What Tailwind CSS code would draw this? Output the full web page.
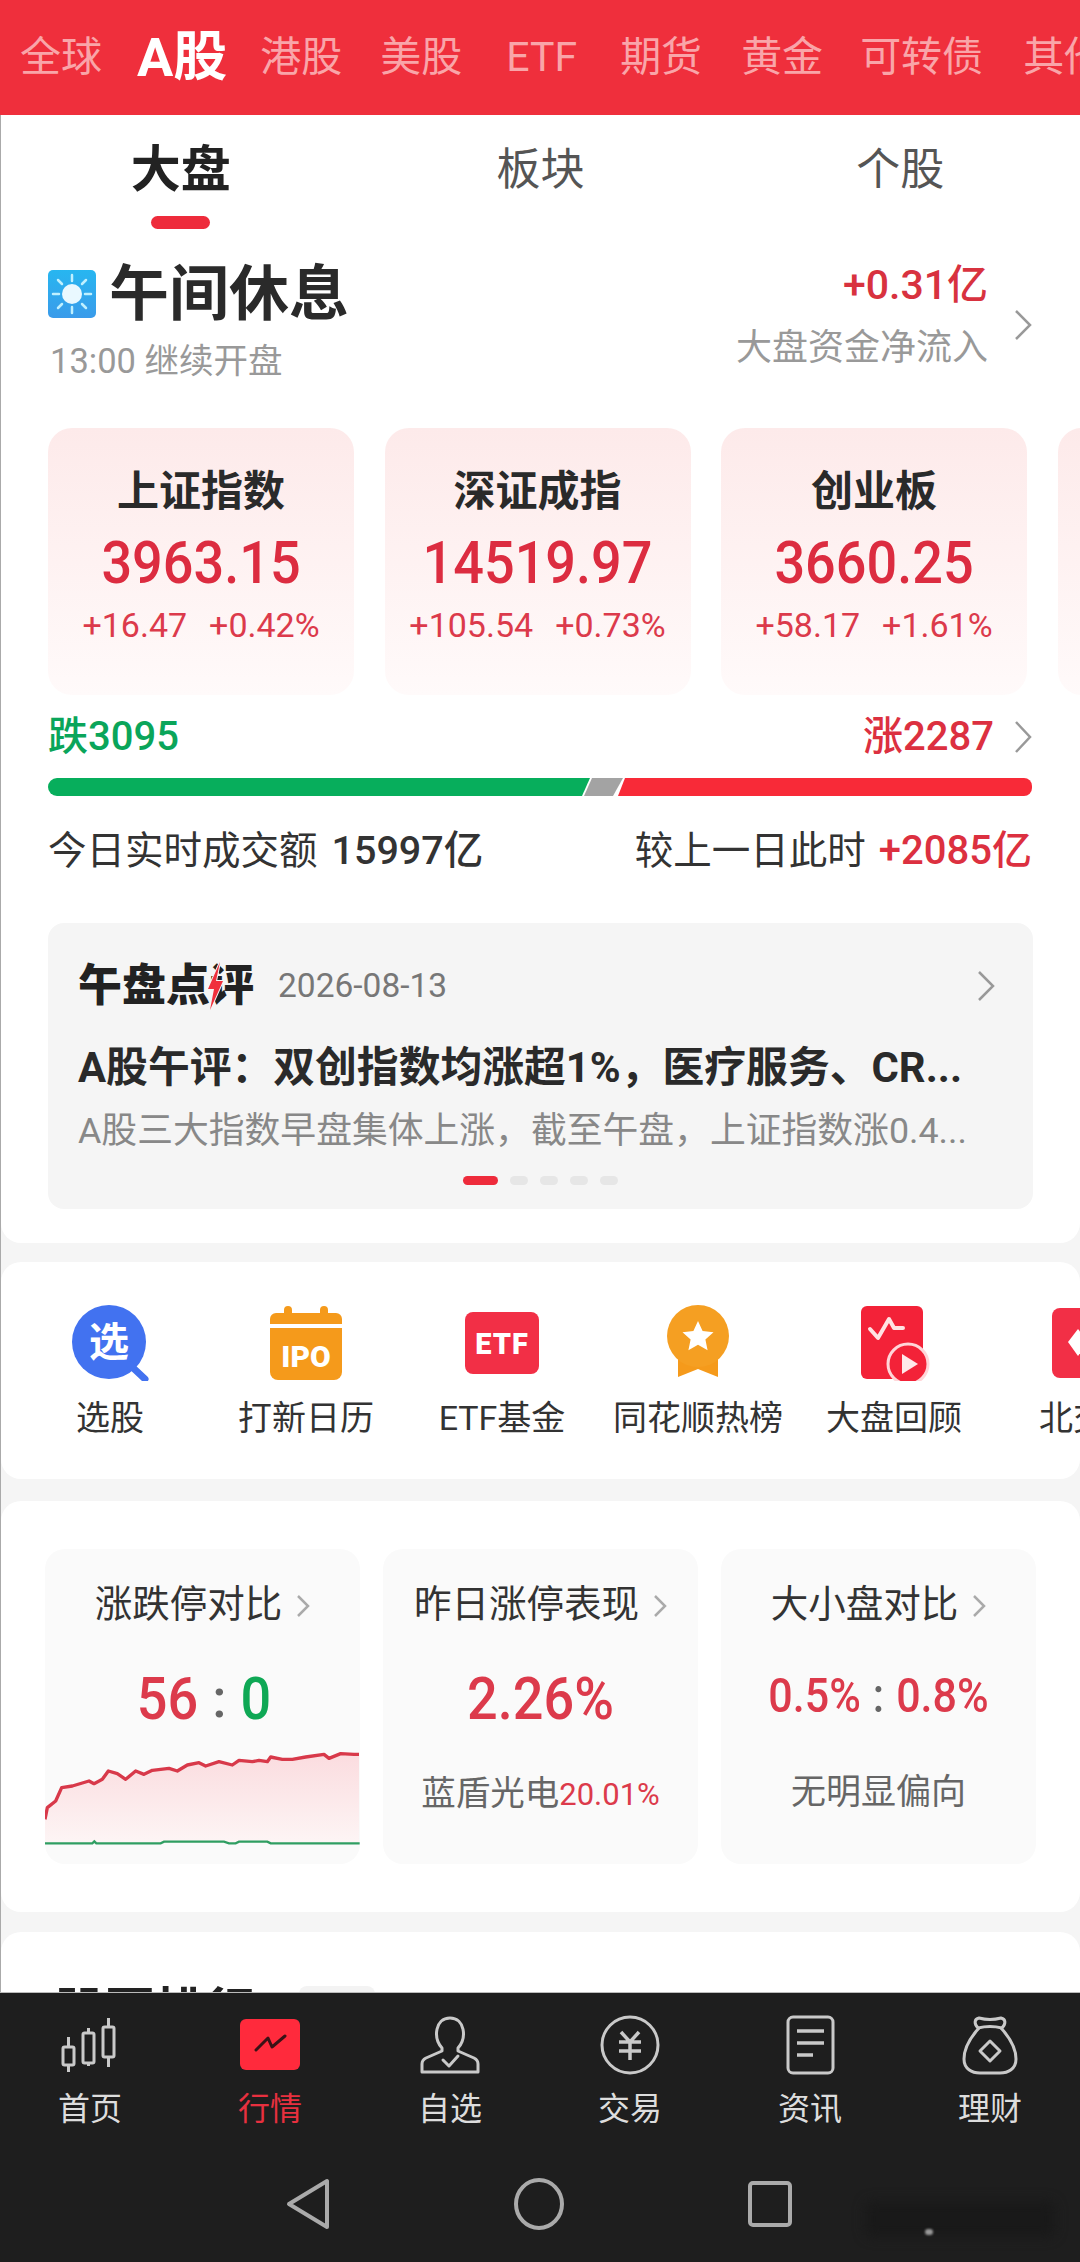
<!DOCTYPE html>
<html lang="zh-CN">
<head>
    <meta charset="UTF-8">
    <meta name="viewport" content="width=device-width, initial-scale=1.0">
    <title>行情</title>
    <script src="https://cdn.jsdelivr.net/npm/@tailwindcss/browser@4"></script>
</head>
<body class="relative flex h-[2262px] w-[1080px] flex-col overflow-hidden bg-[#f5f5f5] font-['Roboto','Noto_Sans_CJK_SC',sans-serif]">

    <!-- Market tabs -->
    <header class="flex h-[115px] shrink-0 items-center overflow-hidden whitespace-nowrap bg-[#ef2f3c] pl-[20px] text-[41px] leading-none text-[#f9a5a9]">
        <span>全球</span>
        <span class="ml-[35px] text-[54px] font-bold text-white">A股</span>
        <span class="ml-[33px]">港股</span>
        <span class="ml-[38px]">美股</span>
        <span class="ml-[44px]">ETF</span>
        <span class="ml-[43px]">期货</span>
        <span class="ml-[39px]">黄金</span>
        <span class="ml-[37px]">可转债</span>
        <span class="ml-[40px]">其他</span>
    </header>

    <main class="min-h-0 flex-1 overflow-hidden border-l border-[#aaa]">

        <!-- Overview -->
        <section class="h-[1128px] rounded-b-[20px] bg-white">
            <div class="grid h-[123px] grid-cols-3 text-center">
                <div class="flex flex-col items-center pt-[28px]">
                    <span class="text-[50px] font-bold leading-[54px] text-[#222]">大盘</span>
                    <span class="mt-[19px] h-[13px] w-[59px] rounded-full bg-[#ee2b3b]"></span>
                </div>
                <div class="pt-[28px] text-[44px] leading-[54px] text-[#555]">板块</div>
                <div class="pt-[28px] text-[44px] leading-[54px] text-[#555]">个股</div>
            </div>

            <div class="mt-[22px] flex justify-between pl-[47px] pr-[48px]">
                <div>
                    <div class="flex items-center pt-[3px]">
                        <svg class="mr-[13px] -mt-[3px]" width="48" height="48" viewBox="0 0 48 48">
                            <defs><linearGradient id="sky" x1="0" y1="0" x2="0" y2="1"><stop offset="0" stop-color="#27b6f0"/><stop offset="1" stop-color="#3a9bea"/></linearGradient></defs>
                            <rect width="48" height="48" rx="5" fill="url(#sky)"/>
                            <circle cx="24" cy="24" r="10" fill="#e9f8ff"/>
                            <path d="M24 5v6M24 37v6M5 24h6M37 24h6M10 10l4 4M38 10l-4 4M10 38l4-4M38 38l-4-4" stroke="#bff0ff" stroke-width="2.5" stroke-linecap="round"/>
                        </svg>
                        <span class="text-[60px] font-bold leading-[64px] text-[#2a2a2a]">午间休息</span>
                    </div>
                    <div class="mt-[14px] pl-[2px] text-[34.5px] leading-[40px] text-[#999]">13:00 继续开盘</div>
                </div>
                <div class="flex items-center">
                    <div class="-mt-[9px] text-right">
                        <div class="text-[41px] font-medium leading-[40px] text-[#d8323f]">+0.31亿</div>
                        <div class="mt-[23px] text-[36px] leading-[40px] text-[#999]">大盘资金净流入</div>
                    </div>
                    <svg class="ml-[26px] mt-[8px]" width="18" height="32" viewBox="0 0 18 32" fill="none" stroke="#999" stroke-width="2.5"><path d="M2 2l14 14L2 30"/></svg>
                </div>
            </div>

            <!-- Index cards -->
            <div class="mt-[47px] flex gap-[30.5px] overflow-hidden pl-[47px] text-center">
                <div class="h-[267px] w-[306px] shrink-0 rounded-[24px] bg-linear-to-b from-[#fdeaea] to-[#fffafa] pt-[42px]">
                    <div class="text-[42px] font-bold leading-[44px] text-[#2a2a2a]">上证指数</div>
                    <div class="mt-[19px] inline-block scale-y-110 text-[54px] font-medium leading-[60px] text-[#dc2c40]">3963.15</div>
                    <div class="mt-[14px] flex justify-center gap-[22px] text-[34px] leading-[36px] text-[#dc3a4b]"><span>+16.47</span><span>+0.42%</span></div>
                </div>
                <div class="h-[267px] w-[306px] shrink-0 rounded-[24px] bg-linear-to-b from-[#fdeaea] to-[#fffafa] pt-[42px]">
                    <div class="text-[42px] font-bold leading-[44px] text-[#2a2a2a]">深证成指</div>
                    <div class="mt-[19px] inline-block scale-y-110 text-[54px] font-medium leading-[60px] text-[#dc2c40]">14519.97</div>
                    <div class="mt-[14px] flex justify-center gap-[22px] text-[34px] leading-[36px] text-[#dc3a4b]"><span>+105.54</span><span>+0.73%</span></div>
                </div>
                <div class="h-[267px] w-[306px] shrink-0 rounded-[24px] bg-linear-to-b from-[#fdeaea] to-[#fffafa] pt-[42px]">
                    <div class="text-[42px] font-bold leading-[44px] text-[#2a2a2a]">创业板</div>
                    <div class="mt-[19px] inline-block scale-y-110 text-[54px] font-medium leading-[60px] text-[#dc2c40]">3660.25</div>
                    <div class="mt-[14px] flex justify-center gap-[22px] text-[34px] leading-[36px] text-[#dc3a4b]"><span>+58.17</span><span>+1.61%</span></div>
                </div>
                <div class="h-[267px] w-[306px] shrink-0 rounded-[24px] bg-linear-to-b from-[#fdeaea] to-[#fffafa]"></div>
            </div>

            <!-- Advance / decline -->
            <div class="mt-[20px] flex items-center justify-between pl-[47px] pr-[48px] text-[40px] font-medium leading-[44px]">
                <span class="text-[#0aa55a]">跌3095</span>
                <span class="flex items-center text-[#dc3040]">涨2287<svg class="ml-[20px]" width="18" height="34" viewBox="0 0 18 34" fill="none" stroke="#999" stroke-width="2.5"><path d="M2 2l14 15L2 32"/></svg></span>
            </div>
            <svg class="ml-[47px] mt-[19px] block" width="985" height="18" viewBox="0 0 985 18">
                <path d="M9 0H542L534 18H9A9 9 0 0 1 9 0Z" fill="#07ae5c"/>
                <path d="M544 0H575L565 18H536Z" fill="#a3a3a3"/>
                <path d="M577 0H976A8 8 0 0 1 984 8V10A8 8 0 0 1 976 18H570Z" fill="#f82a38"/>
            </svg>
            <div class="mt-[33px] flex items-baseline justify-between pl-[47px] pr-[48px] text-[38.5px] leading-[44px] text-[#333]">
                <span>今日实时成交额<span class="ml-[14px] text-[39.5px] font-medium">15997亿</span></span>
                <span>较上一日此时<span class="ml-[13px] text-[40px] font-medium text-[#dc3040]">+2085亿</span></span>
            </div>

            <!-- Midday review -->
            <div class="ml-[47px] mt-[50px] h-[286px] w-[985px] rounded-[16px] bg-[#f5f5f5] px-[30px] pt-[38px]">
                <div class="flex items-center justify-between">
                    <div class="flex items-center">
                        <span class="relative text-[44px] font-black leading-[50px] text-[#222]">午盘点评
                            <svg class="absolute left-[127px] top-[1px]" width="20" height="48" viewBox="0 0 20 48"><path d="M15 0L3 27H9L5 48 18 19H11Z" fill="#f0303c" stroke="#f5f5f5" stroke-width="2" paint-order="stroke"/></svg>
                        </span>
                        <span class="ml-[24px] text-[33.5px] leading-[50px] text-[#777]">2026-08-13</span>
                    </div>
                    <svg width="18" height="32" viewBox="0 0 18 32" fill="none" stroke="#999" stroke-width="2.5" class="mr-[8px]"><path d="M2 2l14 14L2 30"/></svg>
                </div>
                <div class="mt-[32px] whitespace-nowrap text-[41.8px] font-bold leading-[50px] text-[#2a2a2a]">A股午评：双创指数均涨超1%，医疗服务、CR...</div>
                <div class="mt-[16px] whitespace-nowrap text-[35.8px] leading-[44px] text-[#888]">A股三大指数早盘集体上涨，截至午盘，上证指数涨0.4...</div>
                <div class="mt-[23px] flex justify-center gap-[12px]">
                    <span class="h-[9px] w-[35px] rounded-full bg-[#ee2b3b]"></span>
                    <span class="h-[9px] w-[18px] rounded-full bg-[#e6e6e6]"></span>
                    <span class="h-[9px] w-[18px] rounded-full bg-[#e6e6e6]"></span>
                    <span class="h-[9px] w-[18px] rounded-full bg-[#e6e6e6]"></span>
                    <span class="h-[9px] w-[18px] rounded-full bg-[#e6e6e6]"></span>
                </div>
            </div>
        </section>

        <!-- Shortcuts -->
        <section class="mt-[19px] flex h-[217px] overflow-hidden rounded-[20px] bg-white pl-[11px] pt-[43px] text-center text-[34px] leading-[40px] text-[#333]">
            <div class="w-[196px] shrink-0">
                <svg class="mx-auto block" width="80" height="76" viewBox="0 0 80 76">
                    <circle cx="39" cy="37" r="37" fill="#4272f0"/>
                    <path d="M60 60l15 14" stroke="#4272f0" stroke-width="7" stroke-linecap="round"/>
                    <text x="39" y="51" font-size="40" font-weight="700" fill="#fff" text-anchor="middle">选</text>
                </svg>
                <div class="mt-[17px] whitespace-nowrap">选股</div>
            </div>
            <div class="w-[196px] shrink-0">
                <svg class="mx-auto block" width="72" height="76" viewBox="0 0 72 76">
                    <path d="M14 8V5a4 4 0 0 1 8 0v3h28V5a4 4 0 0 1 8 0v3h8a6 6 0 0 1 6 6v5H0v-5a6 6 0 0 1 6-6Z" fill="#f59a1b"/>
                    <path d="M0 23h72v44a8 8 0 0 1-8 8H8a8 8 0 0 1-8-8Z" fill="#f59a1b"/>
                    <text x="36" y="62" font-size="30" font-weight="900" fill="#fff" text-anchor="middle">IPO</text>
                </svg>
                <div class="mt-[17px] whitespace-nowrap">打新日历</div>
            </div>
            <div class="w-[196px] shrink-0">
                <svg class="mx-auto block" width="76" height="76" viewBox="0 0 76 76">
                    <rect x="1" y="7" width="74" height="62" rx="8" fill="#f22f46"/>
                    <text x="38" y="49" font-size="29" font-weight="900" letter-spacing="1" fill="#fff" text-anchor="middle">ETF</text>
                </svg>
                <div class="mt-[17px] whitespace-nowrap">ETF基金</div>
            </div>
            <div class="w-[196px] shrink-0">
                <svg class="mx-auto block" width="64" height="76" viewBox="0 0 64 76">
                    <path d="M12 50V72L32 64 52 72V50Z" fill="#f59a1b"/>
                    <circle cx="32" cy="31" r="31" fill="#f59f22"/>
                    <path d="M32 16l4.6 10 10.9 1.2-8.1 7.3 2.2 10.7L32 39.7l-9.600 5.5 2.200-10.700-8.100-7.300L27.400 26Z" fill="#fff"/>
                </svg>
                <div class="mt-[17px] whitespace-nowrap">同花顺热榜</div>
            </div>
            <div class="w-[196px] shrink-0">
                <svg class="mx-auto block" width="72" height="76" viewBox="0 0 72 76">
                    <rect x="3" y="1" width="62" height="73" rx="6" fill="#f32238"/>
                    <path d="M12 24l8 9 11-19 5 9h9" fill="none" stroke="#ffe3e3" stroke-width="4" stroke-linejoin="round" stroke-linecap="round"/>
                    <circle cx="50" cy="59" r="20" fill="#f32238" stroke="#ffd6d9" stroke-width="3"/>
                    <path d="M44 49l16 10-16 10Z" fill="#ffe9e9"/>
                </svg>
                <div class="mt-[17px] whitespace-nowrap">大盘回顾</div>
            </div>
            <div class="w-[196px] shrink-0">
                <svg class="ml-[60px] block" width="72" height="76" viewBox="0 0 72 76">
                    <rect x="0" y="3" width="72" height="70" rx="8" fill="#f22f46"/>
                    <path d="M26 24l-10 13 10 14 10-14Z" fill="#fff"/>
                </svg>
                <div class="mt-[17px] whitespace-nowrap">北交所</div>
            </div>
        </section>

        <!-- Comparison cards -->
        <section class="mt-[22px] grid h-[411px] grid-cols-[315px_315px_315px] gap-[23px] rounded-[20px] bg-white pl-[44px] pt-[48px] text-center">
            <div class="h-[315px] overflow-hidden rounded-[20px] bg-[#fafafa] pt-[33px]">
                <div class="flex items-center justify-center text-[37.5px] leading-[44px] text-[#333]">涨跌停对比
                    <svg class="ml-[14px] mt-[4px]" width="14" height="24" viewBox="0 0 14 24" fill="none" stroke="#aaa" stroke-width="2.5"><path d="M2 2l10 10L2 22"/></svg>
                </div>
                <div class="mt-[43px] flex justify-center gap-[14px] pl-[3px] text-[54px] font-medium leading-[60px]">
                    <span class="scale-y-110 text-[#dc3a4b]">56</span><span class="text-[#666]">:</span><span class="scale-y-110 text-[#0fa855]">0</span>
                </div>
                <svg class="mt-[22px] block" width="315" height="100" viewBox="48 180 945 300">
                    <defs><linearGradient id="area" x1="0" y1="0" x2="0" y2="1"><stop offset="0" stop-color="#fbdcdf"/><stop offset="1" stop-color="#fdf5f5"/></linearGradient></defs>
                    <path d="M48 385L55 350 80 330 98 290 130 285 180 270 195 278 220 265 238 240 265 248 290 265 320 240 345 250 370 238 420 232 445 240 475 222 510 215 530 225 570 212 610 222 630 208 670 212 690 208 715 212 725 198 760 205 790 205 830 198 885 190 900 202 935 188 975 190 990 190V456H48Z" fill="url(#area)"/>
                    <path d="M48 385L55 350 80 330 98 290 130 285 180 270 195 278 220 265 238 240 265 248 290 265 320 240 345 250 370 238 420 232 445 240 475 222 510 215 530 225 570 212 610 222 630 208 670 212 690 208 715 212 725 198 760 205 790 205 830 198 885 190 900 202 935 188 975 190 990 190" fill="none" stroke="#d8394a" stroke-width="10" stroke-linejoin="round"/>
                    <path d="M46 457H190L196 451 202 457H395L405 452H585L600 457H620L630 452H715L725 457H992" fill="none" stroke="#2f9e62" stroke-width="7"/>
                </svg>
            </div>
            <div class="h-[315px] rounded-[20px] bg-[#fafafa] pt-[33px]">
                <div class="flex items-center justify-center text-[37.5px] leading-[44px] text-[#333]">昨日涨停表现
                    <svg class="ml-[14px] mt-[4px]" width="14" height="24" viewBox="0 0 14 24" fill="none" stroke="#aaa" stroke-width="2.5"><path d="M2 2l10 10L2 22"/></svg>
                </div>
                <div class="mt-[43px] scale-y-110 text-[54px] font-medium leading-[60px] text-[#dc3a4b]">2.26%</div>
                <div class="mt-[42px] flex items-baseline justify-center whitespace-nowrap text-[34.5px] leading-[44px] text-[#666]">蓝盾光电<span class="text-[31px] text-[#dc3a4b]">20.01%</span></div>
            </div>
            <div class="h-[315px] rounded-[20px] bg-[#fafafa] pt-[33px]">
                <div class="flex items-center justify-center text-[37.5px] leading-[44px] text-[#333]">大小盘对比
                    <svg class="ml-[14px] mt-[4px]" width="14" height="24" viewBox="0 0 14 24" fill="none" stroke="#aaa" stroke-width="2.5"><path d="M2 2l10 10L2 22"/></svg>
                </div>
                <div class="mt-[39px] flex scale-y-110 justify-center gap-[12px] text-[43px] font-medium leading-[60px] text-[#dc3a4b]">
                    <span>0.5%</span><span class="text-[#666]">:</span><span>0.8%</span>
                </div>
                <div class="mt-[46px] text-[35px] leading-[44px] text-[#666]">无明显偏向</div>
            </div>
        </section>

        <!-- Next section, cut off by the nav bar -->
        <section class="mt-[20px] flex h-[80px] rounded-t-[20px] bg-white pl-[54px] pt-[50px]">
            <span class="text-[50px] font-bold leading-[60px] text-[#222]">股票排行</span>
            <span class="ml-[44px] mt-[4px] h-[40px] w-[76px] rounded-[8px] bg-[#f3f3f3]"></span>
        </section>
    </main>

    <!-- Bottom nav -->
    <nav class="relative z-10 h-[270px] shrink-0 border-t border-[#bbb] bg-[#1e1e1e]">
        <div class="grid grid-cols-6 pt-[22px] text-center text-[32px] leading-[40px] text-[#ddd]">
            <div>
                <svg class="mx-auto block h-[60px]" width="60" height="60" viewBox="0 -3 60 60" fill="none" stroke="#c9c9c9" stroke-width="3">
                    <rect x="3" y="29" width="11" height="18" rx="1.500"/><path d="M8.500 19v10M8.500 47v7"/>
                    <rect x="23" y="15" width="11" height="30" rx="1.500"/><path d="M28.500 10v5M28.500 45v3"/>
                    <rect x="43" y="9" width="11" height="30" rx="1.500"/><path d="M48.500 0v9M48.500 39v10"/>
                </svg>
                <div class="mt-[14px]">首页</div>
            </div>
            <div>
                <svg class="mx-auto block h-[60px]" width="60" height="60" viewBox="0 -4 60 60">
                    <rect width="60" height="51" rx="6" fill="#ff2a3c"/>
                    <path d="M16 31l12-12 4 9 13-11" fill="none" stroke="#3a1216" stroke-width="3" stroke-linecap="round" stroke-linejoin="round"/>
                </svg>
                <div class="mt-[14px] text-[#e8303f]">行情</div>
            </div>
            <div>
                <svg class="mx-auto block h-[60px]" width="60" height="60" viewBox="0 0 60 58" fill="none" stroke="#c9c9c9" stroke-width="3" stroke-linejoin="round">
                    <path d="M22 32C13 22 15 2 30 2S47 22 38 32V35L54 42Q58 44 58 48V56H2V48Q2 44 6 42L22 35Z"/>
                    <path d="M23 44l6 6 9-10" stroke-linecap="round"/>
                </svg>
                <div class="mt-[14px]">自选</div>
            </div>
            <div>
                <svg class="mx-auto block h-[60px]" width="60" height="60" viewBox="0 0 60 60" fill="none" stroke="#c9c9c9" stroke-width="3">
                    <circle cx="30" cy="30" r="28"/>
                    <path d="M21 17l9 10 9-10M19 27H41M19 36H41M30 27V45" stroke-width="3.500"/>
                </svg>
                <div class="mt-[14px]">交易</div>
            </div>
            <div>
                <svg class="mx-auto block h-[60px]" width="49" height="60" viewBox="0 0 49 60" fill="none" stroke="#c9c9c9" stroke-width="3">
                    <rect x="2" y="2" width="45" height="56" rx="5"/>
                    <path d="M11 16H38M11 28H38M11 40H27" stroke-width="3.500"/>
                </svg>
                <div class="mt-[14px]">资讯</div>
            </div>
            <div>
                <svg class="mx-auto block h-[60px]" width="56" height="60" viewBox="0 0 56 60" fill="none" stroke="#c9c9c9" stroke-width="3" stroke-linejoin="round">
                    <path d="M16 13C12 9 12 4 17 3Q28 6 39 3C44 4 44 9 40 13Q28 10 16 13Z"/>
                    <path d="M17 13C7 24 2 34 2 44C2 54 10 58 18 58H38C46 58 54 54 54 44C54 34 49 24 39 13"/>
                    <path d="M28 26L38 36 28 46 18 36Z"/>
                </svg>
                <div class="mt-[14px]">理财</div>
            </div>
        </div>
        <div class="mt-[49px] flex items-center justify-center gap-[184px] pr-[3px]">
            <svg width="44" height="52" viewBox="0 0 44 52" fill="none" stroke="#aaa" stroke-width="4" stroke-linejoin="round"><path d="M41 3V49L3 26Z"/></svg>
            <svg width="50" height="52" viewBox="0 0 50 52" fill="none" stroke="#aaa" stroke-width="4"><ellipse cx="25" cy="26" rx="23" ry="24"/></svg>
            <svg width="44" height="46" viewBox="0 0 44 46" fill="none" stroke="#aaa" stroke-width="4"><rect x="2" y="2" width="40" height="42" rx="3"/></svg>
        </div>
        <!-- faint watermark smudge -->
        <div class="absolute left-[865px] top-[208px] h-[36px] w-[190px] rounded-[8px] bg-[#191919] blur-[6px]"></div>
        <div class="absolute left-[925px] top-[236px] h-[6px] w-[8px] rounded-full bg-[#999] blur-[1px]"></div>
    </nav>
</body>
</html>
